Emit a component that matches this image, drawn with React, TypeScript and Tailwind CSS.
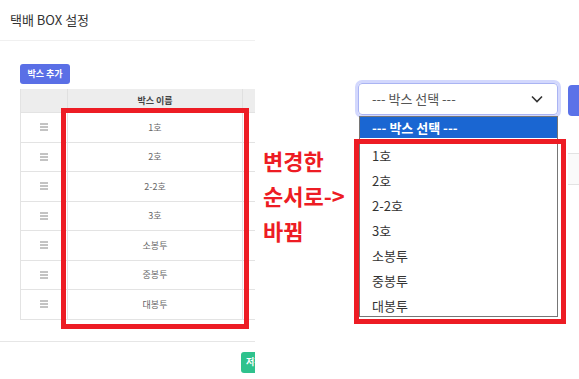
import React from "react";

const rows = ["1호", "2호", "2-2호", "3호", "소봉투", "중봉투", "대봉투"];
const font = { fontFamily: '"Noto Sans CJK KR", "Noto Sans", sans-serif' };

function Hamburger() {
  return (
    <svg width="8" height="8" viewBox="0 0 8 8" className="text-[#888]">
      <path d="M0 1h8M0 4h8M0 7h8" stroke="currentColor" strokeWidth="1" />
    </svg>
  );
}

export default function App() {
  return (
    <div className="relative flex w-[579px] h-[379px] overflow-hidden bg-white" style={font}>
      {/* Left panel */}
      <div className="flex h-full w-[255px] shrink-0 flex-col overflow-hidden">
        <div className="flex h-[41px] shrink-0 items-center border-b border-[#f0f0f0] pl-[10px] pb-[1px] text-[13px] text-[#333]">
          택배 BOX 설정
        </div>
        <div className="ml-[20px] mt-[23px] flex h-[20px] w-[50px] items-center justify-center rounded-[3px] bg-[#5a6fe6] text-[9px] font-bold text-white">
          박스 추가
        </div>
        <div className="ml-[20px] mt-[5px] w-[300px] border-l border-b border-[#e3e3e3]">
          <div className="grid h-[23px] grid-cols-[47px_175px_78px] bg-[#ededed] text-[9px] font-bold text-[#444]">
            <div className="border-r border-[#e0e0e0]" />
            <div className="flex items-center justify-center border-r border-[#e0e0e0]">박스 이름</div>
            <div />
          </div>
          {rows.map((r) => (
            <div
              key={r}
              className="grid h-[29.5px] grid-cols-[47px_175px_78px] border-t border-[#e3e3e3] text-[9px] text-[#666]"
            >
              <div className="flex items-center justify-center border-r border-[#e3e3e3]">
                <Hamburger />
              </div>
              <div className="flex items-center justify-center border-r border-[#e3e3e3]">{r}</div>
              <div />
            </div>
          ))}
        </div>
        <div className="mt-[21px] h-[1px] w-full shrink-0 bg-[#e6e6e6]" />
        <div className="ml-[241px] mt-[10px] flex h-[21px] w-[40px] shrink-0 items-center rounded-[3px] bg-[#2ec28d] pl-[5px] text-[9px] font-bold text-white">
          저장
        </div>
      </div>

      {/* Right side */}
      <div className="relative flex h-full flex-1">
        <div className="w-[103px] shrink-0 pl-[8px] pt-[143px] text-[22px] font-bold leading-[35px] text-[#ed1c24]">
          <div>변경한</div>
          <div>순서로-&gt;</div>
          <div>바뀜</div>
        </div>
        <div className="relative w-[200px] shrink-0 pt-[83px]">
          <div className="flex h-[32px] items-center justify-between rounded-[4px] border border-[#aab4f3] pl-[13px] pr-[14px] text-[13px] text-[#555] ring-[3px] ring-[#d3d8fd]">
            <span>--- 박스 선택 ---</span>
            <svg width="12" height="8" viewBox="0 0 12 8">
              <path d="M1 1.5l5 5 5-5" fill="none" stroke="#333" strokeWidth="1.6" />
            </svg>
          </div>
          <div className="absolute left-[1px] top-[116px] h-[201px] w-[199px] border border-[#767676] bg-white text-[13px] text-[#333]">
            <div className="flex h-[21px] items-center bg-[#1a66d2] pl-[12px] font-bold text-white">--- 박스 선택 ---</div>
            <div className="pt-[5px]">
              {rows.map((r) => (
                <div key={r} className="flex h-[25px] items-center pl-[12px]">
                  {r}
                </div>
              ))}
            </div>
          </div>
          <div className="absolute left-[-4px] top-[139px] h-[185px] w-[212px] border-[5px] border-[#ed1c24]" />
        </div>
        <div className="flex flex-1 flex-col pl-[10px]">
          <div className="mt-[85px] h-[31px] w-full rounded-l-[4px] bg-[#5b72e8]" />
          <div className="mt-[37px] h-[32px] w-full border-y border-[#e3e3e3] bg-[#fafafa]" />
        </div>
      </div>

      {/* Left red annotation */}
      <div className="absolute left-[61px] top-[108px] h-[221px] w-[188px] border-[5px] border-[#ed1c24]" />
    </div>
  );
}
